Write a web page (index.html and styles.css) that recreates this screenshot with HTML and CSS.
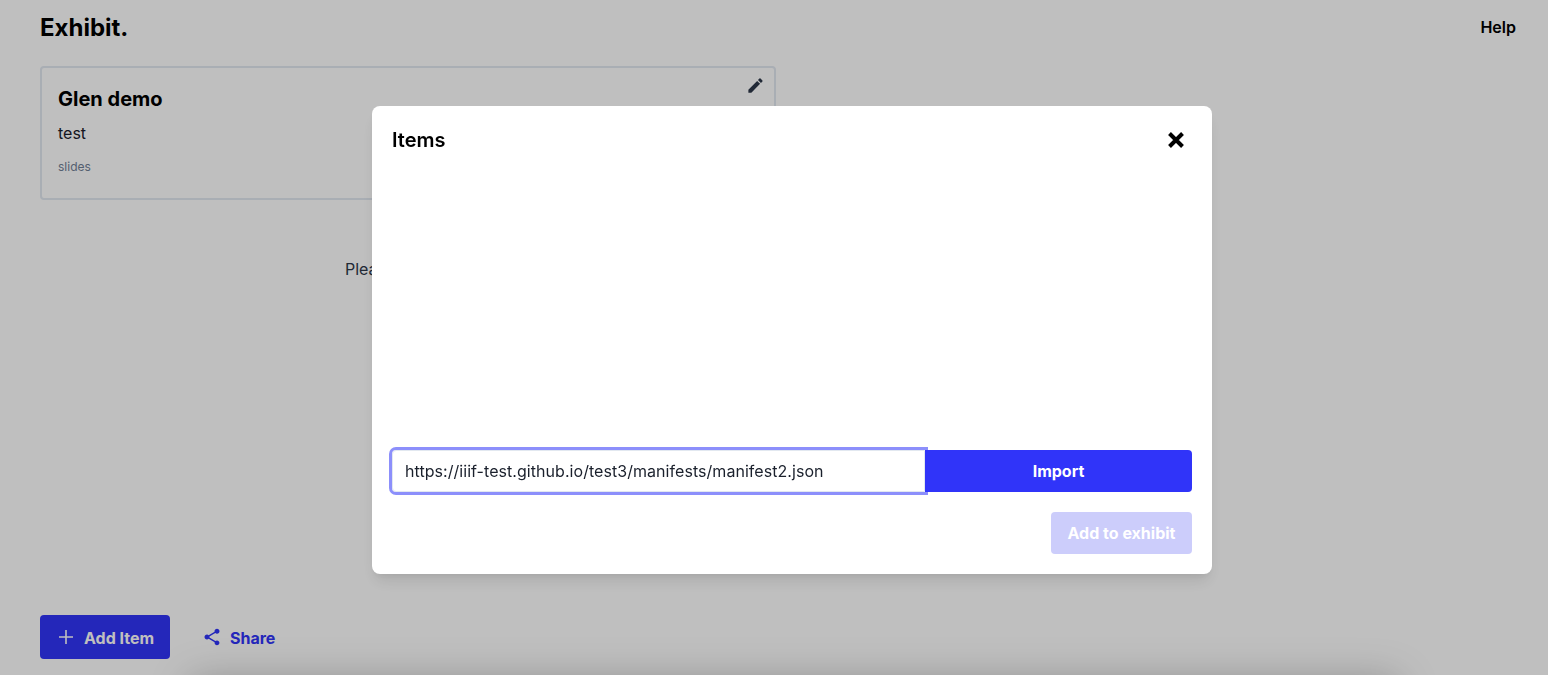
FILE: index.html
```html
<!DOCTYPE html>
<html lang="en">
<head>
<meta charset="utf-8">
<title>Exhibit</title>
<link rel="stylesheet" href="styles.css">
</head>
<body>
<div class="page">
  <header class="topbar">
    <h1 class="logo">Exhibit.</h1>
    <a class="help">Help</a>
  </header>
  <section class="card">
    <svg class="edit" viewBox="0 0 24 24" width="19" height="19"><path d="M3 17.25V21h3.75L17.81 9.94l-3.75-3.75L3 17.25zM20.71 7.04a1 1 0 0 0 0-1.41l-2.34-2.34a1 1 0 0 0-1.41 0l-1.83 1.83 3.75 3.75 1.83-1.83z"/></svg>
    <h2 class="card-title">Glen demo</h2>
    <p class="card-desc">test</p>
    <p class="card-type">slides</p>
  </section>
  <p class="empty">Please add an item to your exhibit</p>
  <footer class="actions">
    <button class="btn-add">
      <svg viewBox="0 0 16 16" width="16" height="16"><path d="M8 1v14M1 8h14" fill="none" stroke="currentColor" stroke-width="1.6"/></svg>
      <span>Add Item</span>
    </button>
    <button class="btn-share">
      <svg viewBox="0 0 24 24" width="20" height="20"><path d="M18 16.08c-.76 0-1.44.3-1.96.77L8.91 12.7c.05-.23.09-.46.09-.7s-.04-.47-.09-.7l7.05-4.11c.54.5 1.25.81 2.04.81 1.66 0 3-1.34 3-3s-1.34-3-3-3-3 1.34-3 3c0 .24.04.47.09.7L8.04 9.81C7.5 9.31 6.79 9 6 9c-1.66 0-3 1.34-3 3s1.34 3 3 3c.79 0 1.5-.31 2.04-.81l7.12 4.16c-.05.21-.08.43-.08.65 0 1.61 1.31 2.92 2.92 2.92s2.92-1.31 2.92-2.92-1.31-2.92-2.92-2.92z"/></svg>
      <span>Share</span>
    </button>
  </footer>
  <div class="below"></div>
</div>
<div class="overlay">
  <div class="modal">
    <div class="modal-head">
      <h3 class="modal-title">Items</h3>
      <svg class="close" viewBox="0 0 24 24" width="24" height="24"><path d="M5.5 5.5l13 13M18.5 5.5l-13 13" fill="none" stroke="#000" stroke-width="4"/></svg>
    </div>
    <div class="modal-body"></div>
    <form class="import">
      <input class="url" type="text" value="https://iiif-test.github.io/test3/manifests/manifest2.json">
      <button class="btn-import" type="button">Import</button>
    </form>
    <div class="modal-foot">
      <button class="btn-exhibit" type="button" disabled>Add to exhibit</button>
    </div>
  </div>
</div>
</body>
</html>
```
FILE: styles.css
```css
* { box-sizing: border-box; }
html, body { margin: 0; height: 100%; overflow: hidden; }
body { font-family: Inter, "Liberation Sans", sans-serif; color: #000; background: #fff; }
button { font-family: inherit; border: 0; cursor: pointer; }
.page { height: 675px; display: flex; flex-direction: column; padding: 0 32px 0 40px; position: relative; overflow: hidden; }
.topbar { display: flex; justify-content: space-between; align-items: center; height: 56px; flex: none; }
.logo { margin: 0; font-size: 24px; line-height: 32px; font-weight: 700; }
.help { font-size: 16px; line-height: 24px; font-weight: 600; margin-top: -2px; }
.card { width: 736px; height: 134px; margin-top: 10px; flex: none; border: 2px solid #e2e8f0; border-radius: 4px; padding: 17px 16px 16px; position: relative; }
.edit { position: absolute; top: 8px; right: 9px; fill: #2d3748; }
.card-title { margin: 0; font-size: 20px; line-height: 28px; font-weight: 700; }
.card-desc { margin: 8px 0 0; font-size: 16px; line-height: 24px; color: #1a202c; }
.card-type { margin: 14px 0 0; font-size: 12px; line-height: 16px; color: #718096; }
.empty { margin: 57px 0 0 305px; font-size: 16px; line-height: 24px; color: #2d3748; }
.actions { margin-top: auto; margin-bottom: 16px; display: flex; align-items: center; gap: 32px; flex: none; }
.btn-add { height: 44px; width: 130px; display: flex; align-items: center; gap: 10px; padding: 0 0 0 18px; background: #3034f9; color: #fff; border-radius: 4px; font-size: 16px; font-weight: 700; }
.btn-add span, .btn-share span { position: relative; top: 1px; }
.btn-share { display: flex; align-items: center; gap: 8px; padding: 0; background: none; color: #3034f9; font-size: 16px; font-weight: 700; }
.btn-share svg { fill: currentColor; }
.below { position: absolute; left: 200px; right: 160px; top: 690px; height: 40px; box-shadow: 0 0 40px 10px rgba(0,0,0,.25); }
.overlay { position: fixed; inset: 0; background: rgba(0,0,0,.25); display: flex; justify-content: center; align-items: flex-start; padding: 106px 0 0 36px; }
.modal { width: 840px; height: 468px; background: #fff; border-radius: 8px; padding: 20px; display: flex; flex-direction: column; box-shadow: 0 10px 15px -3px rgba(0,0,0,.1), 0 4px 6px -2px rgba(0,0,0,.05); }
.modal-head { display: flex; justify-content: space-between; align-items: center; height: 28px; padding-right: 4px; flex: none; }
.modal-title { margin: 0; font-size: 20px; line-height: 28px; font-weight: 600; }
.close { flex: none; }
.modal-body { flex: 1; }
.import { display: flex; height: 42px; flex: none; }
.url { width: 533px; height: 42px; border: 1px solid #e2e8f0; border-radius: 4px 0 0 4px; padding: 0 12px; font: 400 16px Inter, "Liberation Sans", sans-serif; letter-spacing: .05px; color: #1a202c; outline: 3px solid #8c8ffb; }
.btn-import { flex: 1; background: #3034f9; color: #fff; font-size: 16px; font-weight: 700; border-radius: 0 4px 4px 0; position: relative; z-index: 1; }
.modal-foot { display: flex; justify-content: flex-end; margin-top: 20px; flex: none; }
.btn-exhibit { width: 141px; height: 42px; background: #cccdfb; color: #fff; font-size: 16px; font-weight: 700; border-radius: 4px; }
```
